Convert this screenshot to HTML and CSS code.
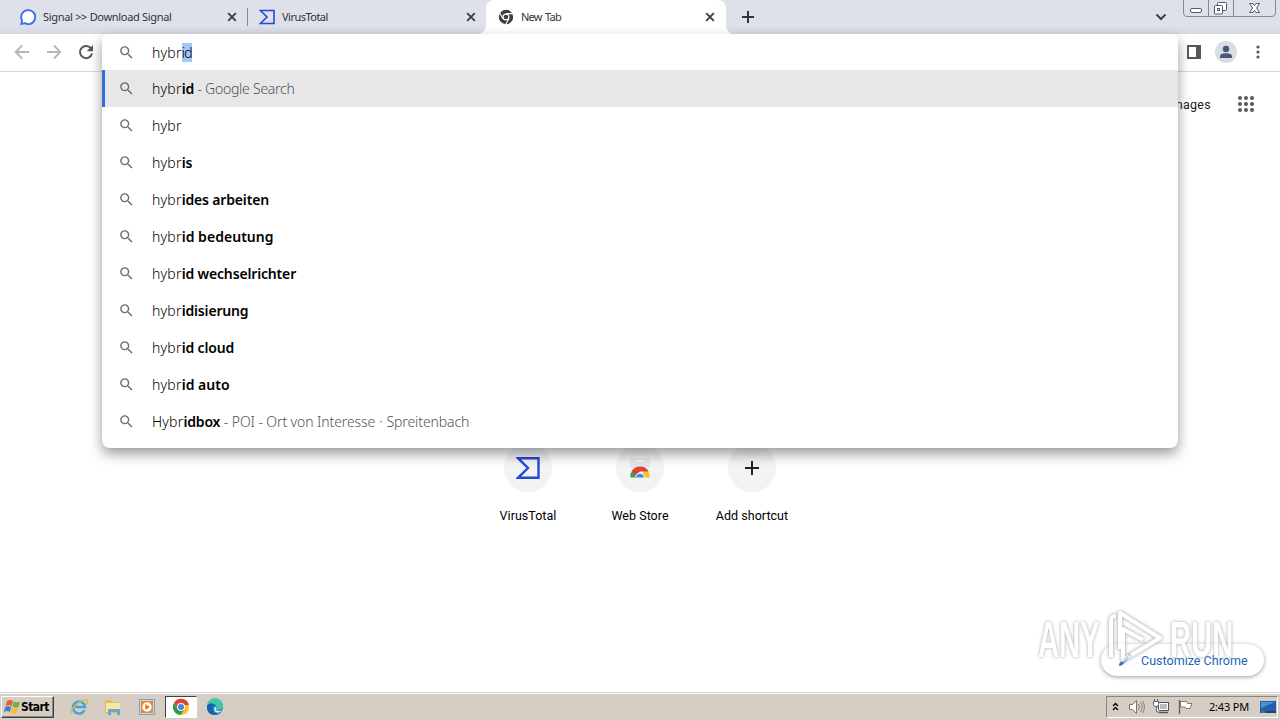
FILE: index.html
```html
<!DOCTYPE html>
<html lang="en">
<head>
<meta charset="utf-8">
<title>New Tab</title>
<link rel="stylesheet" href="styles.css">
</head>
<body>
<svg width="0" height="0" class="defs">
  <symbol id="search" viewBox="0 0 24 24"><path d="M15.5 14h-.79l-.28-.27A6.47 6.47 0 0 0 16 9.5 6.5 6.5 0 1 0 9.5 16c1.61 0 3.09-.59 4.23-1.57l.27.28v.79l5 4.99L20.49 19l-4.99-5zm-6 0C7.01 14 5 11.99 5 9.5S7.01 5 9.5 5 14 7.01 14 9.5 11.99 14 9.5 14z"/></symbol>
  <symbol id="close" viewBox="0 0 10 10"><path d="M1.2 1.2l7.6 7.6M8.8 1.2L1.2 8.8" fill="none" stroke="#3c4043" stroke-width="1.9"/></symbol>
  <symbol id="sigma" viewBox="0 0 24 22"><path d="M2 1.2h20.500v19.600H2l10-9.800z" fill="none" stroke="#2448d8" stroke-width="2.400"/></symbol>
</svg>
<header class="tabs">
  <div class="tab first">
    <svg class="fav" viewBox="0 0 16 16"><path d="M8 1.100a7 7 0 1 1-3.200 13.100L1.400 15l.7-3.500A7 7 0 0 1 8 1.100z" fill="#fff" stroke="#3a6df0" stroke-width="1.900"/></svg>
    <span class="title t1">Signal &gt;&gt; Download Signal</span>
    <svg class="x"><use href="#close"/></svg>
  </div>
  <div class="tab second">
    <svg class="fav"><use href="#sigma" width="16" height="16"/></svg>
    <span class="title t2">VirusTotal</span>
    <svg class="x"><use href="#close"/></svg>
  </div>
  <div class="tab active">
    <svg class="fav" viewBox="0 0 16 16"><circle cx="8" cy="8" r="7.200" fill="#3c4043"/><circle cx="8" cy="8" r="3.500" fill="#fff"/><circle cx="8" cy="8" r="2.300" fill="#3c4043"/><path d="M8 4.600h6.700M5 9.700L1.700 4M11 9.700l-3.400 5.800" stroke="#fff" stroke-width="1.100"/></svg>
    <span class="title t3">New Tab</span>
    <svg class="x"><use href="#close"/></svg>
  </div>
  <svg class="plus" viewBox="0 0 12 12"><path d="M6 0v12M0 6h12" stroke="#303238" stroke-width="2"/></svg>
  <svg class="chev" viewBox="0 0 12 8"><path d="M1.500 1.500L6 6l4.500-4.500" fill="none" stroke="#3c4043" stroke-width="2"/></svg>
  <svg class="winbtns" viewBox="0 0 94 18"><path d="M.5 0v13q0 3.500 3.500 3.500h85q3.500 0 3.500-3.500V0M25.500 0v16M50.500 0v16" fill="none" stroke="#858994"/><rect x="7.500" y="8.500" width="11" height="4" rx="1.500" fill="#fff" stroke="#555962"/><rect x="34.500" y="2.500" width="9" height="8" rx="1" fill="#fff" stroke="#555962"/><rect x="31.500" y="5.500" width="8" height="8.500" rx="1" fill="#fff" stroke="#555962"/><rect x="34.500" y="8.500" width="2" height="2" fill="none" stroke="#555962"/><path d="M66.500 3.500h3.300l1.700 2.200 1.700-2.200h3.300L73.500 8l3 4.500h-3.300l-1.700-2.200-1.700 2.200h-3.300l3-4.500z" fill="#fff" stroke="#555962"/></svg>
</header>
<nav class="toolbar">
  <svg class="nav" viewBox="0 0 16 16"><path d="M15 8H2M8 1.500L1.700 8 8 14.500" fill="none" stroke="#b4b6b9" stroke-width="1.800"/></svg>
  <svg class="nav" viewBox="0 0 16 16"><path d="M1 8h13M8 1.500L14.300 8 8 14.500" fill="none" stroke="#b4b6b9" stroke-width="1.800"/></svg>
  <svg class="nav" viewBox="0 0 16 16"><path d="M13 4.400A6.100 6.100 0 1 0 14 9.500" fill="none" stroke="#55585c" stroke-width="2"/><path d="M15 1v6.300H8.700z" fill="#55585c"/></svg>
  <div class="right">
    <svg class="panel" viewBox="0 0 14 14"><path d="M0 0h14v14H0zM2 2v10h7V2z" fill="#55585c" fill-rule="evenodd"/></svg>
    <svg class="avatar" viewBox="0 0 22 22"><circle cx="11" cy="11" r="11" fill="#dadde3"/><circle cx="11" cy="8" r="3.200" fill="#4a5878"/><path d="M5 17v-1.500q0-3.300 6-3.300t6 3.300V17z" fill="#4a5878"/></svg>
    <svg class="dots" viewBox="0 0 4 14"><circle cx="2" cy="2" r="1.600"/><circle cx="2" cy="7" r="1.600"/><circle cx="2" cy="12" r="1.600"/></svg>
  </div>
</nav>
<main class="page">
  <div class="top"><span class="images">Images</span>
    <svg class="grid" viewBox="0 0 16 16"><circle cx="2" cy="2" r="2"/><circle cx="8" cy="2" r="2"/><circle cx="14" cy="2" r="2"/><circle cx="2" cy="8" r="2"/><circle cx="8" cy="8" r="2"/><circle cx="14" cy="8" r="2"/><circle cx="2" cy="14" r="2"/><circle cx="8" cy="14" r="2"/><circle cx="14" cy="14" r="2"/></svg>
  </div>
  <div class="shortcuts">
    <div class="short"><i><svg width="24" height="22"><use href="#sigma"/></svg></i><span>VirusTotal</span></div>
    <div class="short"><i><svg width="24" height="24" viewBox="0 0 24 24"><path d="M2 2h20v10H2z" fill="#e4e6e8"/><path d="M7 5h10" stroke="#f4f5f6" stroke-width="2"/><path d="M2.300 21.500a9.700 9.700 0 0 1 2.200-7.200L9 21.500z" fill="#31a350"/><path d="M21.700 21.500a9.700 9.700 0 0 0-2.200-7.200l-4.500 1v6.200z" fill="#fbc21c"/><path d="M3.600 15.500a9.700 9.700 0 0 1 17 0H12l-4.500 4z" fill="#de4032"/><path d="M7.300 21.500a4.700 4.700 0 0 1 9.400 0z" fill="#fff"/><path d="M8.200 21.500a3.800 3.800 0 0 1 7.600 0z" fill="#4385ef"/></svg></i><span>Web Store</span></div>
    <div class="short"><i><svg width="14" height="14" viewBox="0 0 14 14"><path d="M7 0v14M0 7h14" stroke="#202124" stroke-width="2"/></svg></i><span>Add shortcut</span></div>
  </div>
  <button class="customize"><svg width="14" height="14" viewBox="0 0 14 14"><path d="M1 13l.6-3L9 2.800l2.300 2.300L4 12.300zM9.700 2.100L11 .8q.6-.4 1.200 0l1.100 1.200q.4.500 0 1L12 4.400z" fill="#2766bd"/></svg><span>Customize Chrome</span></button>
  <div class="mark">
    <span>ANY</span>
    <svg width="62" height="62" viewBox="0 0 62 62"><g fill="none" stroke-linejoin="round"><path class="halo" d="M5 48V11q0-4 5-4M14 40V4l40 25-37 22V20l20 11" stroke="#fff" stroke-width="4"/></g></svg>
    <span>RUN</span>
  </div>
</main>
<section class="omni">
  <div class="row input"><svg><use href="#search"/></svg><p>hybr<mark>id</mark></p></div>
  <div class="row chosen"><svg><use href="#search"/></svg><p>hybr<b>id</b><em class="e1"> - Google Search</em></p></div>
  <div class="row"><svg><use href="#search"/></svg><p>hybr</p></div>
  <div class="row"><svg><use href="#search"/></svg><p>hybr<b>is</b></p></div>
  <div class="row"><svg><use href="#search"/></svg><p>hybr<b>ides arbeiten</b></p></div>
  <div class="row"><svg><use href="#search"/></svg><p>hybr<b class="wide">id bedeutung</b></p></div>
  <div class="row"><svg><use href="#search"/></svg><p>hybr<b>id wechselrichter</b></p></div>
  <div class="row"><svg><use href="#search"/></svg><p>hybr<b>idisierung</b></p></div>
  <div class="row"><svg><use href="#search"/></svg><p>hybr<b>id cloud</b></p></div>
  <div class="row"><svg><use href="#search"/></svg><p>hybr<b class="wide">id auto</b></p></div>
  <div class="row"><svg><use href="#search"/></svg><p>Hybr<b>idbox</b><em class="e2"> - POI - Ort von Interesse <span class="dot">·</span> Spreitenbach</em></p></div>
</section>
<footer class="taskbar">
  <div class="start"><svg width="17" height="16" viewBox="0 0 17 16"><path d="M3 2q3-2 6 0L7.500 7q-3-1.500-6 0z" fill="#e8602c"/><path d="M9.700 2.500q3 1.500 6.300 0L14.500 8q-3 1.500-6.300-.5z" fill="#76b043"/><path d="M1.200 8q3-1.500 6 0l-1.500 5q-3-1.800-5.700 0z" fill="#3b7fd0"/><path d="M7.900 8.500q3 2 6.300.5l-1.500 5q-3 1.500-6.300-.5z" fill="#f8bf2b"/></svg><span>Start</span></div>
  <div class="apps">
    <svg viewBox="0 0 18 18"><path d="M14.500 12A6 6 0 1 1 15 9H5" fill="none" stroke="#45a5df" stroke-width="2.600"/><path d="M2 16Q-1 13 6 7t11-5q1 2-1 5" fill="none" stroke="#e5b532" stroke-width="1.300"/></svg>
    <svg viewBox="0 0 18 18"><path d="M1 2h6l1 2h7v11H1z" fill="#e5bd55"/><path d="M2 5h14v9H2z" fill="#f9e8a5"/><path d="M4 17v-6h12v6h-3v-3H7v3z" fill="#68a9d4"/></svg>
    <svg viewBox="0 0 18 18"><rect x="1.500" y="1.500" width="15" height="15" fill="#c1dbed" stroke="#73a4c5"/><rect x="3" y="3" width="12" height="12" fill="#ee871e"/><circle cx="9" cy="9" r="4.700" fill="#fff"/><path d="M7.300 6v6l4.700-3z" fill="#e87717"/></svg>
    <div class="pressed"><svg viewBox="0 0 18 18"><circle cx="9" cy="9" r="8" fill="#f9c51d"/><path d="M2 5a8 8 0 0 1 14.900 2H9L6 11z" fill="#df4436"/><path d="M2 5a8 8 0 0 0 6.500 12l4-6H6z" fill="#279b50"/><circle cx="9" cy="9" r="4" fill="#fff"/><circle cx="9" cy="9" r="3" fill="#4384ed"/></svg></div>
    <svg viewBox="0 0 18 18"><circle cx="9" cy="9" r="8" fill="#1978c4"/><path d="M1 8a8 8 0 0 1 16 0q0 4-5 4-3 0-1.500-2.500Q10 5 5 6 2 6 1 8z" fill="#45c6a9"/><path d="M1 8q3-5 8-1-4 0-3 4.500Q7 16 12 16.400 3 18.500 1 11z" fill="#1762ae"/><path d="M10.500 9.500q-2 3 2 3.500 2 0 3.500-1-2 3.500-5.500 2.500-4-2-1.500-6z" fill="#d8eef2"/></svg>
  </div>
  <div class="tray">
    <svg class="up" viewBox="0 0 7 9"><path d="M1 4l2.500-2.500L6 4M1 8l2.500-2.500L6 8" fill="none" stroke="#000" stroke-width="1.300"/></svg>
    <svg class="snd" viewBox="0 0 18 16"><path d="M1.500 5.500h3l4-4v13l-4-4h-3z" fill="#fff" stroke="#777"/><path d="M10.500 5q2 3 0 6M12.500 3q3.500 5 0 10M14.500 2q4 6 0 12" fill="none" stroke="#858585"/></svg>
    <svg class="net" viewBox="0 0 17 16"><rect x="5.500" y="3.500" width="10" height="8" fill="#bbb" stroke="#555"/><path d="M6.500 4.500h8v6h-8z" fill="none" stroke="#fff"/><path d="M6 13.500h9" stroke="#555" stroke-width="1.500"/><path d="M.5 2.500h5v3q0 2-2.500 2t-2.500-2zM1.500 0v2M4.500 0v2M3.500 7v6h3" fill="#fff" stroke="#666"/></svg>
    <svg class="flag" viewBox="0 0 16 16"><path d="M2.500 1v14" stroke="#666" stroke-width="1.500"/><path d="M3.500 2.500h6l1 2h4.500l-2 5h-4l-1-1.500H3.500z" fill="#fff" stroke="#777"/></svg>
    <span class="time">2:43 PM</span>
    <svg class="desk" viewBox="0 0 16 14"><path d="M0 1h16v10H0z" fill="#225fae"/><path d="M1 2h14L1 8z" fill="#4d91d7"/><path d="M0 11h16v2H0z" fill="#24446d"/><path d="M1 12h4" stroke="#74bf4d"/></svg>
  </div>
</footer>
</body>
</html>
```
FILE: styles.css
```css
*{box-sizing:border-box}
body{margin:0;width:1280px;height:720px;overflow:hidden;position:relative;display:flex;flex-direction:column;background:#fff;font-family:"Noto Sans",sans-serif;color:#202124}
svg{display:block;flex:none}
.defs{position:absolute}
.tabs{height:34px;flex:none;display:flex;align-items:center;background:linear-gradient(#dee1e9 0 26px,#d5d8de);position:relative}
.tab{height:34px;display:flex;align-items:center;flex:none}
.first{width:248px;padding:0 11px 0 20px;position:relative}
.first::after{content:"";position:absolute;right:0;top:8px;width:1px;height:18px;background:#858990}
.second{width:238px;padding:0 10px 0 11px}
.active{width:240px;padding:0 11px 0 12px;background:#fff;border-radius:8px 8px 0 0;position:relative}
.active::before,.active::after{content:"";position:absolute;bottom:0;width:8px;height:8px}
.active::before{left:-8px;background:radial-gradient(circle at 0 0,transparent 7.500px,#fff 8px)}
.active::after{right:-8px;background:radial-gradient(circle at 100% 0,transparent 7.500px,#fff 8px)}
.fav{width:16px;height:16px}
.title{font-size:11px;margin-left:7px;padding-bottom:2px;flex:1;white-space:nowrap;color:#303338}
.t1{letter-spacing:-.31px}
.t2{letter-spacing:-.52px}
.t3{letter-spacing:-.75px;word-spacing:1.200px}
.x{width:10px;height:10px}
.plus{width:12px;height:12px;margin-left:16px}
.chev{width:12px;height:8px;margin-left:auto;margin-right:16px}
.winbtns{width:94px;height:18px;align-self:flex-start;margin-right:3px}
.toolbar{height:38px;flex:none;border-bottom:1px solid #d8dadd;display:flex;align-items:center;padding:0 20px 1px 14px;gap:16px;background:#fff}
.nav{width:16px;height:16px}
.right{margin-left:auto;display:flex;align-items:center}
.panel{width:14px;height:14px}
.avatar{width:22px;height:22px;margin:0 19px 0 14px}
.dots{width:4px;height:14px;fill:#55585c}
.page{flex:1;position:relative;background:#fff}
.top{display:flex;justify-content:flex-end;align-items:center;height:64px;padding-right:26px;gap:27px}
.images{font:12.500px Roboto,sans-serif;letter-spacing:.3px;color:#202124}
.grid{width:16px;height:16px;fill:#55585c}
.shortcuts{display:flex;justify-content:center;margin-top:308px}
.short{width:112px;display:flex;flex-direction:column;align-items:center;font:12.500px Roboto,sans-serif;color:#000}
.short i{width:48px;height:48px;border-radius:50%;background:#f1f3f4;display:flex;align-items:center;justify-content:center;margin-bottom:16px}
.short span{letter-spacing:.03px}
.customize{position:absolute;right:16px;bottom:16px;width:163px;height:32px;border:0;border-radius:16px;background:#fff;box-shadow:0 1px 4px #0006;display:flex;align-items:center;padding:0 0 0 17px;gap:9px;font:12.500px Roboto,sans-serif;letter-spacing:.02px;color:#2362b8;white-space:nowrap}
.mark{position:absolute;left:1038px;top:537px;display:flex;align-items:center;gap:4px;font:bold 50px/62px "Liberation Sans",sans-serif;color:#fff;text-shadow:0 0 3px #999,0 0 5px #bbb;opacity:.72}
.mark span{width:64px;transform:scaleX(.585);transform-origin:left}
.mark span:last-child{margin-left:-2px}
.halo{filter:drop-shadow(0 0 1.500px #999) drop-shadow(0 0 1.500px #bbb)}
.omni{position:absolute;left:102px;top:34px;width:1076px;height:414px;background:#fff;border-radius:6px 6px 8px 8px;box-shadow:0 6px 13px #0006;overflow:hidden}
.row{height:37px;display:flex;align-items:center;padding-left:16px}
.row svg{width:17px;height:17px;fill:#6b6e72}
.row p{margin:0 0 0 17px;font-size:14px;line-height:20px;white-space:pre;color:#000;font-weight:350;letter-spacing:.2px}
.row b{font-weight:600;letter-spacing:-.16px}
.row .wide{letter-spacing:.04px}
.row em{font-style:normal;font-weight:300;color:#505357}
.row .e1{letter-spacing:-.25px}
.row .e2{letter-spacing:-.1px}
.dot{margin:0 .5px}
.input{height:36px}
.input p{padding-top:1px}
.chosen{background:#e7e7e7;box-shadow:inset 3px 0 #2b6fdb}
mark{background:#a2c6f5;color:inherit;letter-spacing:-.7px}
.taskbar{height:28px;flex:none;background:#d6cec5;border-top:1px solid #d4d0c8;box-shadow:inset 0 1px #fff;display:flex;align-items:center}
.start{width:53px;height:22px;margin-left:1px;border:1px solid;border-color:#fff #404040 #404040 #fff;box-shadow:inset -1px -1px #8b8680;display:flex;align-items:center;padding-left:2px;font:bold 12px "DejaVu Sans Condensed","DejaVu Sans",sans-serif;letter-spacing:-.55px;color:#000}
.apps{display:flex;align-items:center;margin-left:16px;gap:16px}
.apps svg{width:18px;height:18px}
.pressed{width:32px;height:22px;margin:0 -7px;background:#fff;border:1px solid;border-color:#404040 #fff #fff #404040;display:flex;align-items:center;justify-content:center}
.tray{margin-left:auto;margin-right:2px;width:172px;height:22px;border:1px solid;border-color:#8b8680 #fff #fff #8b8680;display:flex;align-items:center;padding-left:5px}
.up{width:7px;height:9px}
.snd{width:18px;height:16px;margin-left:9px}
.net{width:17px;height:16px;margin-left:7px}
.flag{width:16px;height:16px;margin-left:7px}
.time{font-size:11px;margin-left:16px;color:#000;white-space:nowrap;width:41px;letter-spacing:-.2px}
.desk{width:16px;height:14px;margin-left:10px}
```
